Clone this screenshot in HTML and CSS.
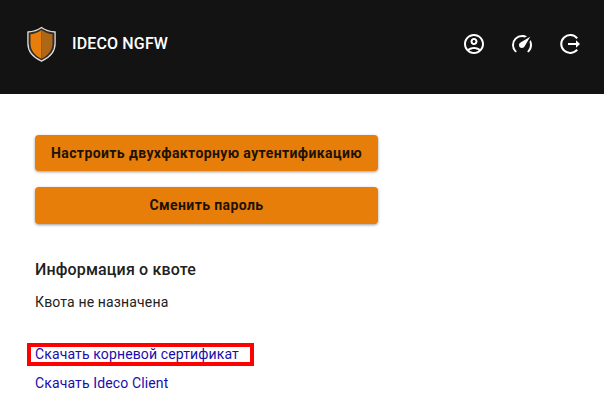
FILE: index.html
```html
<!DOCTYPE html>
<html lang="ru">
<head>
<meta charset="utf-8">
<title>IDECO NGFW</title>
<link rel="stylesheet" href="styles.css">
</head>
<body>
<header class="header">
  <svg class="logo" width="30" height="36" viewBox="0 0 30 36">
    <path d="M14.500 1.500C11 4 6.500 5.600 .9 6V17.500C.9 26 6.500 31.500 14.500 35.200C22.500 31.500 28.100 26 28.100 17.500V6C22.500 5.600 18 4 14.500 1.500Z" fill="#302d2a" stroke="#e3ddd6" stroke-width="1.300"/>
    <path d="M14.500 4C11.500 6.200 8 7.700 3.500 8.200V17.500C3.500 24.500 8 29.500 14.500 32.800Z" fill="#e77e0b"/>
    <path d="M14.500 4C17.500 6.200 21 7.700 25.500 8.200V17.500C25.500 24.500 21 29.500 14.500 32.800Z" fill="#ae6617"/>
  </svg>
  <span class="brand">IDECO NGFW</span>
  <nav class="actions">
    <svg class="icon" viewBox="0 0 24 24"><path fill="currentColor" d="M12 2C6.480 2 2 6.480 2 12s4.480 10 10 10 10-4.480 10-10S17.520 2 12 2zM7.350 18.500C8.660 17.560 10.260 17 12 17s3.340.56 4.650 1.500C15.340 19.440 13.740 20 12 20s-3.340-.56-4.650-1.500zm10.790-1.380C16.450 15.800 14.320 15 12 15s-4.450.8-6.140 2.120C4.700 15.730 4 13.950 4 12c0-4.420 3.580-8 8-8s8 3.580 8 8c0 1.950-.7 3.730-1.860 5.120zM12 6c-1.930 0-3.500 1.570-3.500 3.500S10.070 13 12 13s3.500-1.570 3.500-3.500S13.930 6 12 6zm0 5c-.83 0-1.500-.67-1.500-1.500S11.170 8 12 8s1.500.67 1.500 1.500S12.830 11 12 11z"/></svg>
    <svg class="icon" viewBox="0 0 24 24"><path fill="currentColor" d="M12 16a3 3 0 0 1-3-3c0-1.120.61-2.100 1.500-2.610l9.710-5.620-5.530 9.580C14.170 15.340 13.160 16 12 16m0-13c1.810 0 3.500.5 4.970 1.320l-2.100 1.210C14 5.190 13 5 12 5a8 8 0 0 0-8 8c0 2.210.89 4.210 2.340 5.650h.01c.39.39.39 1.020 0 1.410s-1.030.39-1.420.01A9.970 9.970 0 0 1 2 13 10 10 0 0 1 12 3m10 10c0 2.760-1.120 5.260-2.930 7.070-.39.38-1.020.38-1.410-.01a.996.996 0 0 1 0-1.410A7.950 7.950 0 0 0 20 13c0-1-.19-2-.54-2.900L20.670 8C21.500 9.500 22 11.180 22 13"/></svg>
    <svg class="icon" viewBox="0 0 24 24"><path fill="none" stroke="currentColor" stroke-width="2" d="M19.200 6.300A9 9 0 1 0 19.200 17.700M10 12H19"/><path fill="currentColor" d="M18 8.200L22 12L18 15.800Z"/></svg>
  </nav>
</header>
<main class="content">
  <div class="buttons">
    <button class="button">Настроить двухфакторную аутентификацию</button>
    <button class="button button-password">Сменить пароль</button>
  </div>
  <h2 class="title">Информация о квоте</h2>
  <p class="quota">Квота не назначена</p>
  <div class="links">
    <a class="link marked" href="#">Скачать корневой сертификат</a>
    <a class="link" href="#">Скачать Ideco Client</a>
  </div>
</main>
</body>
</html>
```
FILE: styles.css
```css
* { box-sizing: border-box; }
body {
  margin: 0;
  height: 417px;
  overflow: hidden;
  background: #fff;
  color: #212121;
  font-family: Roboto, sans-serif;
}
.header {
  display: flex;
  align-items: flex-start;
  height: 94px;
  padding: 26px 22px 0 27px;
  background: #131313;
  color: #fff;
}
.logo { flex: none; }
.brand {
  margin-left: 15px;
  font-size: 16px;
  font-weight: 500;
  line-height: 36px;
  letter-spacing: 0.15px;
}
.actions {
  display: flex;
  gap: 24px;
  margin-left: auto;
  padding-top: 6px;
}
.icon { width: 24px; height: 24px; }
.content { padding: 41px 35px 0; }
.buttons {
  display: flex;
  flex-direction: column;
  gap: 16px;
  width: 343px;
}
.button {
  height: 36px;
  padding: 0;
  border: 0;
  border-radius: 4px;
  background: #e77e09;
  box-shadow: 0 1px 3px rgba(0, 0, 0, 0.4);
  color: #1c1206;
  font: 700 14px/36px Roboto, sans-serif;
  letter-spacing: 0.4px;
  white-space: nowrap;
}
.button-password {
  height: 37px;
  padding-bottom: 1px;
}
.title {
  margin: 34px 0 0;
  font-size: 16px;
  font-weight: 500;
  line-height: 24px;
  letter-spacing: 0.15px;
}
.quota {
  margin: 10px 0 0;
  font-size: 14px;
  line-height: 20px;
  letter-spacing: 0.15px;
}
.links {
  display: flex;
  flex-direction: column;
  align-items: flex-start;
  margin-top: 31px;
  gap: 7px;
}
.link {
  color: #1a0dab;
  font-size: 14px;
  line-height: 20px;
  letter-spacing: 0.13px;
  text-decoration: none;
}
.marked {
  width: 227px;
  height: 23px;
  margin-left: -8px;
  padding-left: 4px;
  border: 4px solid #f00;
  line-height: 15px;
  white-space: nowrap;
}
```
